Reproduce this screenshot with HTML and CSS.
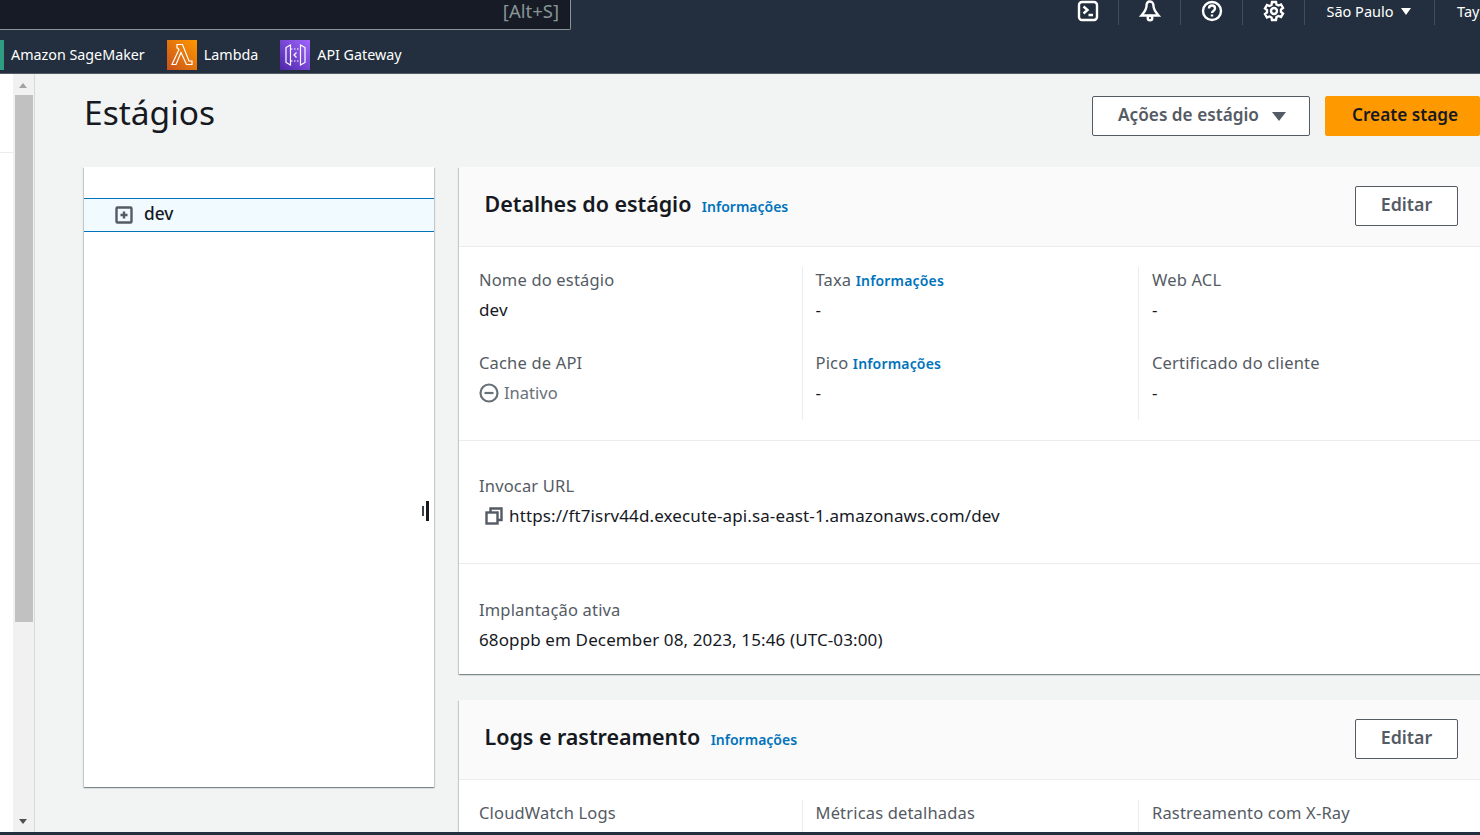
FILE: index.html
```html
<!DOCTYPE html>
<html lang="pt">
<head>
    <meta charset="UTF-8">
    <meta name="viewport" content="width=device-width, initial-scale=1.0">
    <title>Estágios</title>
    <link rel="stylesheet" href="styles.css">
</head>
<body>
    <header class="topbar">
        <div class="toprow">
            <div class="search"><span>[Alt+S]</span></div>
            <div class="tools">
                <div class="tool">
                    <svg width="22" height="22" viewBox="0 0 22 22" fill="none" stroke="#fff" stroke-width="2.4"><rect x="2" y="2" width="18" height="18" rx="3"/><path d="M6.5 6.5l4 3.5-4 3.500M11.500 15h4.500"/></svg>
                </div>
                <div class="tool">
                    <svg width="22" height="22" viewBox="0 0 22 22" fill="none" stroke="#fff" stroke-width="2.4"><path d="M11 1.500c-2.500 0-3.500 2-3.500 4.500 0 3.500-2 6-5 9.500h17c-3-3.500-5-6-5-9.500 0-2.500-1-4.500-3.500-4.500z"/><circle cx="11" cy="18" r="2.300"/></svg>
                </div>
                <div class="tool">
                    <svg width="22" height="22" viewBox="0 0 22 22" fill="none" stroke="#fff" stroke-width="2.4"><circle cx="11" cy="11" r="9"/><path d="M8 8.500c0-4 6-4 6 0 0 2.500-3 2.500-3 4.500M11 14.500v2"/></svg>
                </div>
                <div class="tool">
                    <svg width="22" height="22" viewBox="0 0 22 22" fill="none" stroke="#fff" stroke-width="2.4"><path d="M9 2h4l.5 2.500 2 1 2.500-1 2 3.500-2 1.500v2.500l2 1.500-2 3.500-2.500-1-2 1L13 20H9l-.5-2.500-2-1-2.500 1-2-3.500 2-1.500V10L2 8.500 4 5l2.500 1 2-1z"/><circle cx="11" cy="11" r="3"/></svg>
                </div>
                <div class="tool region">São Paulo <i class="caret-white"></i></div>
                <div class="tool user">Tay</div>
            </div>
        </div>
        <nav class="services">
            <i class="svc-stub"></i>
            <span class="svc-name">Amazon SageMaker</span>
            <span class="svc-icon lambda">
                <svg width="30" height="30" viewBox="0 0 30 30" fill="none" stroke="#fff" stroke-width="1.200"><path d="M10 4.500h5.500l6.500 16.500h3v3.500h-5.500L14 12.500 9 24.500H5L12 9.500 10.500 8H10z"/></svg>
            </span>
            <span class="svc-name">Lambda</span>
            <span class="svc-icon apigw">
                <svg width="30" height="30" viewBox="0 0 30 30" fill="none" stroke="#fff" stroke-width="1.200"><path d="M10.500 5L6 7.500v15l4.500 2.500zM20.500 5l4.500 2.500v15L20.500 25z"/><path d="M11 9h9M11 21h9" stroke-dasharray="1.500 1.500"/><path d="M16.500 12.500L14 15l2.500 2.500"/></svg>
            </span>
            <span class="svc-name">API Gateway</span>
        </nav>
    </header>

    <div class="layout">
        <aside class="rail">
            <div class="rail-side"><div class="rail-line"></div></div>
            <div class="scrollbar">
                <i class="arrow-up"></i>
                <div class="thumb"></div>
                <i class="arrow-down"></i>
            </div>
        </aside>

        <main class="content">
            <div class="page-head">
                <h1>Estágios</h1>
                <div class="page-actions">
                    <button class="btn actions"><span>Ações de estágio</span> <i class="caret-grey"></i></button>
                    <button class="btn primary"><span>Create stage</span></button>
                </div>
            </div>

            <div class="columns">
                <section class="tree">
                    <div class="tree-row">
                        <svg width="18" height="18" viewBox="0 0 18 18" fill="none" stroke="#545b64" stroke-width="2.4"><rect x="1.500" y="1.500" width="15" height="15" rx="1"/><path d="M9 5.500v7M5.500 9h7"/></svg>
                        <span>dev</span>
                    </div>
                    <div class="handle"><i></i><i></i></div>
                </section>

                <div class="panels">
                    <section class="panel first">
                        <div class="panel-head">
                            <h2>Detalhes do estágio</h2>
                            <a class="info">Informações</a>
                            <button class="btn edit"><span>Editar</span></button>
                        </div>
                        <div class="fields">
                            <div class="col">
                                <div class="field"><div class="label">Nome do estágio</div><div class="value">dev</div></div>
                                <div class="field"><div class="label">Cache de API</div>
                                    <div class="value muted">
                                        <svg width="20" height="20" viewBox="0 0 20 20" fill="none" stroke="#687078" stroke-width="2.2"><circle cx="10" cy="10" r="8.500"/><path d="M5.500 10h9"/></svg>
                                        Inativo
                                    </div>
                                </div>
                            </div>
                            <div class="col">
                                <div class="field"><div class="label">Taxa <a class="info">Informações</a></div><div class="value">-</div></div>
                                <div class="field"><div class="label">Pico <a class="info">Informações</a></div><div class="value">-</div></div>
                            </div>
                            <div class="col">
                                <div class="field"><div class="label">Web ACL</div><div class="value">-</div></div>
                                <div class="field"><div class="label">Certificado do cliente</div><div class="value">-</div></div>
                            </div>
                        </div>
                        <div class="block url">
                            <div class="label">Invocar URL</div>
                            <div class="value link-row">
                                <svg width="18" height="18" viewBox="0 0 18 18" fill="none" stroke="#545b64" stroke-width="2.4"><rect x="1.500" y="5.500" width="11" height="11"/><path d="M5.500 5V1.500H16.500V13h-4"/></svg>
                                https://ft7isrv44d.execute-api.sa-east-1.amazonaws.com/dev
                            </div>
                        </div>
                        <div class="block deploy">
                            <div class="label">Implantação ativa</div>
                            <div class="value">68oppb em December 08, 2023, 15:46 (UTC-03:00)</div>
                        </div>
                    </section>

                    <section class="panel">
                        <div class="panel-head">
                            <h2>Logs e rastreamento</h2>
                            <a class="info">Informações</a>
                            <button class="btn edit"><span>Editar</span></button>
                        </div>
                        <div class="fields">
                            <div class="col"><div class="field"><div class="label">CloudWatch Logs</div></div></div>
                            <div class="col"><div class="field"><div class="label">Métricas detalhadas</div></div></div>
                            <div class="col"><div class="field"><div class="label">Rastreamento com X-Ray</div></div></div>
                        </div>
                    </section>
                </div>
            </div>
        </main>
    </div>
    <div class="footer-strip"></div>
</body>
</html>
```
FILE: styles.css
```css
* {
    box-sizing: border-box;
}

html, body {
    height: 100%;
}

body {
    margin: 0;
    font-family: "Noto Sans", sans-serif;
    font-size: 16.5px;
    color: #16191f;
    background: #f2f3f3;
    overflow: hidden;
    display: flex;
    flex-direction: column;
}

.topbar {
    height: 74px;
    flex: none;
    background: #232f3e;
    border-bottom: 1px solid #545b64;
    color: #fff;
}

.toprow {
    height: 30px;
    display: flex;
    justify-content: space-between;
}

.search {
    width: 571px;
    height: 30px;
    background: #161b25;
    border: 1px solid #879596;
    border-width: 0 1px 1px 0;
    border-radius: 0 0 2px 0;
    color: #879596;
    font-size: 18.5px;
    text-align: right;
    padding-right: 11px;
    line-height: 21px;
}

.tools {
    display: flex;
    height: 25px;
}

.tool {
    width: 62px;
    display: flex;
    align-items: center;
    justify-content: center;
    border-left: 1px solid #414d5c;
    padding-bottom: 3px;
}

.tool:first-child {
    border-left: 0;
    width: 61px;
}

.region {
    width: 130px;
    font-size: 14.5px;
    gap: 7px;
    padding-right: 2px;
}

.user {
    width: 46px;
    font-size: 14.5px;
    justify-content: flex-start;
    padding-left: 22px;
    white-space: nowrap;
}

.caret-white {
    width: 0;
    height: 0;
    border: 5.5px solid transparent;
    border-top: 7px solid #fff;
    border-bottom: 0;
}

.services {
    height: 43px;
    display: flex;
    align-items: center;
    padding-top: 7px;
    font-size: 14.3px;
}

.svc-stub {
    width: 4px;
    height: 30px;
    background: #2e9d82;
    margin-right: 7px;
}

.svc-name {
    margin-right: 22px;
    margin-bottom: 2px;
}

.svc-icon {
    width: 30px;
    height: 30px;
    margin-right: 7px;
    display: flex;
    align-items: center;
    justify-content: center;
}

.lambda {
    background: linear-gradient(45deg, #c8511b, #ff9900);
}

.apigw {
    background: linear-gradient(45deg, #4d27a8, #a166ff);
}

.layout {
    flex: 1;
    display: flex;
    min-height: 0;
}

.rail {
    width: 35px;
    flex: none;
    display: flex;
    border-right: 1px solid #d5dbdb;
}

.rail-side {
    width: 13px;
    background: #fff;
    padding-top: 78px;
}

.rail-line {
    height: 1px;
    background: #eaeded;
}

.scrollbar {
    flex: 1;
    background: #f1f1f1;
    padding: 0 0 0 2px;
    position: relative;
}

.thumb {
    width: 18px;
    height: 527px;
    margin-top: 21px;
    background: #c1c1c1;
}

.arrow-up, .arrow-down {
    position: absolute;
    left: 6px;
    width: 0;
    height: 0;
    border: 4.5px solid transparent;
}

.arrow-up {
    top: 9px;
    border-top: 0;
    border-bottom: 5px solid #a3a3a3;
}

.arrow-down {
    bottom: 8px;
    border-bottom: 0;
    border-top: 5px solid #505050;
}

.content {
    flex: 1;
    min-width: 0;
    padding-left: 49px;
    overflow: hidden;
}

.page-head {
    height: 93px;
    display: flex;
    justify-content: space-between;
    padding-top: 22px;
}

h1 {
    margin: 0;
    font-size: 33.5px;
    font-weight: 400;
    line-height: 32px;
}

.page-actions {
    display: flex;
    gap: 15px;
    height: 40px;
}

.btn {
    font-family: inherit;
    font-size: 17.2px;
    font-weight: 600;
    height: 40px;
    background: #fff;
    border: 1px solid #545b64;
    border-radius: 2px;
    color: #545b64;
    padding: 0 0 4px;
}

.actions {
    width: 218px;
    display: flex;
    align-items: center;
    justify-content: center;
    gap: 13px;
    padding-left: 2px;
}

.caret-grey {
    width: 0;
    height: 0;
    margin-top: 5px;
    border: 7.5px solid transparent;
    border-top: 9.5px solid #545b64;
    border-bottom: 0;
}

.primary {
    width: 155px;
    background: #ff9900;
    border-color: #ff9900;
    color: #16191f;
    text-align: left;
    padding-left: 26px;
}

.columns {
    display: flex;
    gap: 25px;
    align-items: flex-start;
}

.tree {
    width: 350px;
    height: 620px;
    flex: none;
    background: #fff;
    padding-top: 31px;
    box-shadow: 0 1px 1px 0 rgba(0, 28, 36, 0.3), 1px 1px 1px 0 rgba(0, 28, 36, 0.15), -1px 1px 1px 0 rgba(0, 28, 36, 0.15);
    position: relative;
}

.tree-row {
    height: 34px;
    display: flex;
    align-items: center;
    gap: 11px;
    padding-left: 31px;
    background: #f1faff;
    border-top: 1px solid #0073bb;
    border-bottom: 1px solid #0073bb;
    font-size: 17.3px;
    font-weight: 500;
}

.tree-row span {
    margin-bottom: 4px;
}

.handle {
    position: absolute;
    top: 334px;
    left: 338px;
    display: flex;
    align-items: center;
    gap: 2px;
}

.handle i {
    display: block;
    width: 2px;
    height: 10px;
    background: #3b4149;
}

.handle i + i {
    width: 3px;
    height: 20px;
    background: #16191f;
}

.panels {
    flex: 1;
    min-width: 0;
}

.panel {
    width: 1040px;
    background: #fff;
    box-shadow: 0 1px 1px 0 rgba(0, 28, 36, 0.3), 1px 1px 1px 0 rgba(0, 28, 36, 0.15), -1px 1px 1px 0 rgba(0, 28, 36, 0.15);
}

.panel.first {
    margin-bottom: 26px;
}

.panel-head {
    height: 80px;
    display: flex;
    align-items: center;
    background: #fafafa;
    border-bottom: 1px solid #eaeded;
    padding: 0 0 7px 25.5px;
    position: relative;
}

h2 {
    margin: 0 10.5px 0 0;
    font-size: 21.5px;
    font-weight: 600;
    letter-spacing: -0.05px;
}

.info {
    color: #0073bb;
    font-size: 14px;
    font-weight: 600;
    padding-top: 7px;
}

.label .info {
    padding-top: 0;
}

.edit {
    width: 103px;
    position: absolute;
    top: 19px;
    left: 896px;
    font-size: 17.8px;
}

.fields {
    display: flex;
    padding-top: 20px;
    border-bottom: 1px solid #eaeded;
}

.col {
    width: 336.5px;
    height: 153px;
    padding-left: 13px;
    border-left: 1px solid #eaeded;
    margin-bottom: 20px;
    flex: none;
}

.col:first-child {
    width: 342.5px;
    border-left: 0;
    padding-left: 20px;
}

.field {
    height: 83px;
}

.label {
    color: #545b64;
    height: 30px;
    line-height: 26px;
    letter-spacing: 0.17px;
}

.value {
    height: 30px;
    line-height: 26px;
    font-size: 17px;
    letter-spacing: 0.12px;
}

.muted {
    color: #687078;
    display: flex;
    align-items: center;
    gap: 5px;
    padding-bottom: 4px;
    font-size: 16.5px;
    letter-spacing: 0;
}

.block {
    padding: 32px 20px 0;
}

.url {
    height: 123px;
    border-bottom: 1px solid #eaeded;
}

.deploy {
    height: 110px;
    padding-top: 33px;
}

.link-row {
    display: flex;
    align-items: center;
    gap: 6px;
    padding-left: 6px;
    padding-bottom: 4px;
    color: #16191f;
}

.footer-strip {
    height: 3px;
    flex: none;
    background: #232f3e;
}
```
